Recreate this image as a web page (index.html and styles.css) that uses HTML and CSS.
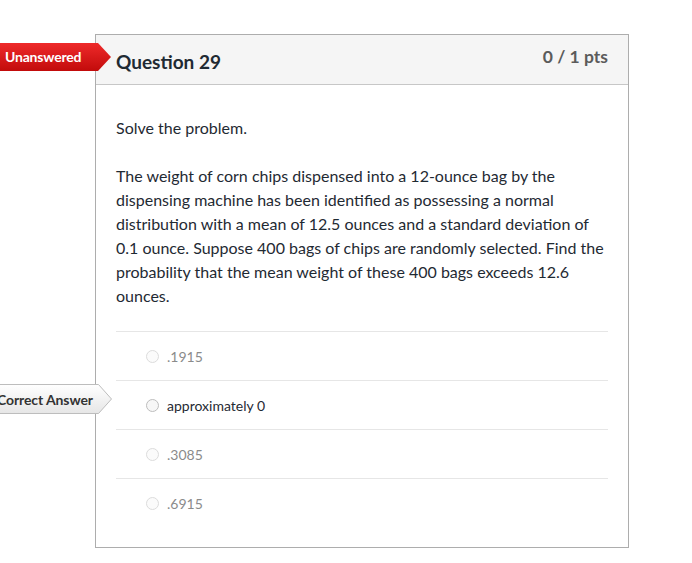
FILE: index.html
```html
<!DOCTYPE html>
<html>
<head>
<meta charset="utf-8">
<link rel="stylesheet" href="styles.css">
</head>
<body>
<div class="page">
  <div class="question">
    <div class="badge badge-unanswered">
      <svg class="badge-bg" width="112" height="28" viewBox="0 0 112 28">
        <defs>
          <linearGradient id="rg" x1="0" y1="0" x2="0" y2="1">
            <stop offset="0" stop-color="#ee2a2a"/>
            <stop offset="1" stop-color="#c20b0b"/>
          </linearGradient>
        </defs>
        <polygon points="0,0 98,0 111,14 98,28 0,28" fill="url(#rg)"/>
      </svg>
      <span class="badge-text">Unanswered</span>
    </div>
    <div class="q-header">
      <span class="q-title">Question 29</span>
      <span class="q-pts">0 / 1 pts</span>
    </div>
    <div class="q-body">
      <p class="q-text">Solve the problem.</p>
      <p class="q-text">The weight of corn chips dispensed into a 12-ounce bag by the dispensing machine has been identified as possessing a normal distribution with a mean of 12.5 ounces and a standard deviation of 0.1 ounce. Suppose 400 bags of chips are randomly selected. Find the probability that the mean weight of these 400 bags exceeds 12.6 ounces.</p>
      <div class="answers">
        <div class="answer"><span class="radio"></span><span class="a-text">.1915</span></div>
        <div class="answer correct">
          <div class="badge badge-correct">
            <svg class="badge-bg" width="114" height="30" viewBox="0 0 114 30">
              <defs>
                <linearGradient id="gg" x1="0" y1="0" x2="0" y2="1">
                  <stop offset="0" stop-color="#ffffff"/>
                  <stop offset="1" stop-color="#e6e6e6"/>
                </linearGradient>
              </defs>
              <polygon points="-2,0.5 99.5,0.5 112.5,15 99.5,29.5 -2,29.5" fill="url(#gg)" stroke="#bdbdbd" stroke-width="1"/>
            </svg>
            <span class="badge-text">Correct Answer</span>
          </div>
          <span class="radio"></span><span class="a-text">approximately 0</span>
        </div>
        <div class="answer"><span class="radio"></span><span class="a-text">.3085</span></div>
        <div class="answer"><span class="radio"></span><span class="a-text">.6915</span></div>
      </div>
    </div>
  </div>
</div>
</body>
</html>
```
FILE: styles.css
```css
html, body {
  margin: 0;
  padding: 0;
  background: #ffffff;
}
body {
  font-family: Lato, "Open Sans", sans-serif;
  color: #2d3b45;
}
.page {
  padding: 34px 0 0 95px;
}
.question {
  position: relative;
  width: 532px;
  border: 1px solid #adadad;
  background: #fff;
}
.q-header {
  height: 49px;
  background: #f5f5f5;
  border-bottom: 1px solid #c7c7c7;
  display: flex;
  align-items: center;
  justify-content: space-between;
  padding: 0 20px;
}
.q-title {
  font-size: 19px;
  font-weight: 700;
  color: #1f2a33;
  position: relative;
  top: 2px;
}
.q-pts {
  font-size: 17.5px;
  font-weight: 700;
  color: #5b5b5b;
  position: relative;
  top: -3px;
}
.q-body {
  padding: 31px 20px 20px 20px;
}
.q-text {
  margin: 0 0 24px 0;
  font-size: 16px;
  line-height: 24px;
  color: #1f2a33;
}
.q-text:last-of-type {
  margin-bottom: 23px;
}
.answer {
  position: relative;
  height: 48px;
  border-top: 1px solid #e6e6e6;
  display: flex;
  align-items: center;
  padding-left: 30px;
}
.radio {
  width: 11px;
  height: 11px;
  border-radius: 50%;
  border: 1px solid #dcdcdc;
  background: #fbfbfb;
  margin-right: 8px;
}
.a-text {
  font-size: 14px;
  color: #8b8b8b;
}
.correct .radio {
  border-color: #bdbdbd;
  background: #f7f7f7;
}
.correct .a-text {
  color: #1f2a33;
}
.badge {
  position: absolute;
  display: flex;
  align-items: center;
}
.badge-bg {
  position: absolute;
  left: 0;
  top: 0;
}
.badge-text {
  position: relative;
  font-size: 14px;
  font-weight: 700;
  white-space: nowrap;
}
.badge-unanswered {
  left: -96px;
  top: 8px;
  width: 112px;
  height: 28px;
}
.badge-unanswered .badge-text {
  color: #ffffff;
  padding-left: 5px;
  letter-spacing: -0.2px;
  top: -1px;
}
.badge-correct {
  left: -117px;
  top: 3px;
  width: 114px;
  height: 30px;
}
.badge-correct .badge-text {
  color: #333333;
  padding-left: 0;
  margin-left: -2px;
  letter-spacing: -0.1px;
}
```
